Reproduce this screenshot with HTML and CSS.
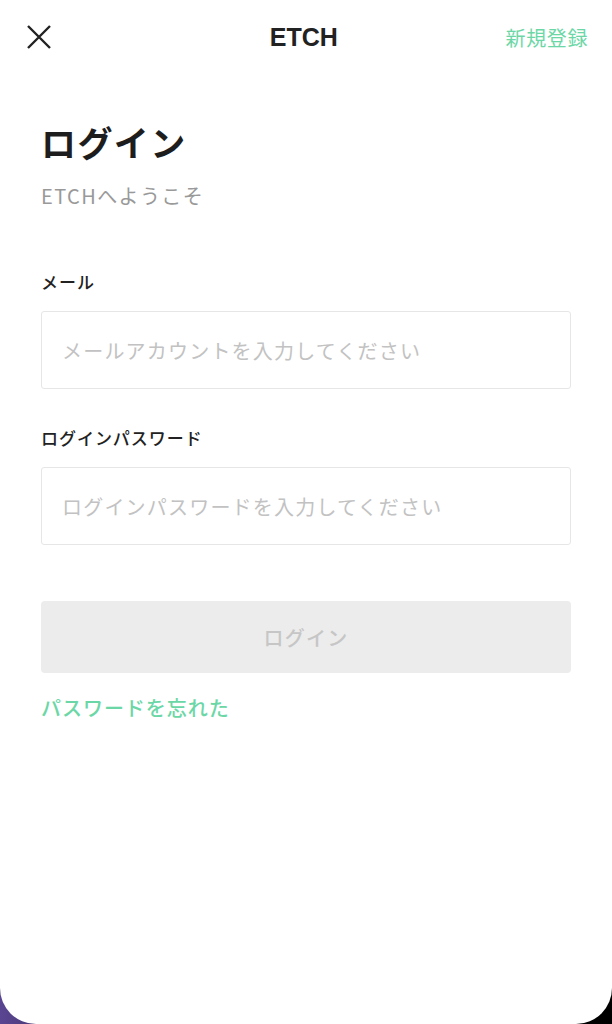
FILE: index.html
```html
<!DOCTYPE html>
<html lang="ja">
<head>
  <meta charset="UTF-8">
  <title>ETCH ログイン</title>
  <link rel="stylesheet" href="styles.css">
</head>
<body>

<div class="screen">
  <header class="topbar">
    <button class="close-btn" aria-label="閉じる">
      <svg width="26" height="26" viewBox="0 0 26 26">
        <path d="M2 2 L24 24 M24 2 L2 24" stroke="#222" stroke-width="2.4" fill="none"/>
      </svg>
    </button>
    <div class="brand">ETCH</div>
    <a class="signup" href="#">新規登録</a>
  </header>

  <main class="content">
    <h1>ログイン</h1>
    <p class="welcome">ETCHへようこそ</p>

    <form class="login-form">
      <label class="field-label">メール</label>
      <input class="field" type="text" placeholder="メールアカウントを入力してください">

      <label class="field-label">ログインパスワード</label>
      <input class="field" type="password" placeholder="ログインパスワードを入力してください">

      <button class="submit-btn" type="button" disabled>ログイン</button>
    </form>

    <a class="forgot" href="#">パスワードを忘れた</a>
  </main>
</div>

</body>
</html>
```

FILE: styles.css
```css
html, body {
  margin: 0;
  height: 100%;
}
body {
  font-family: "Noto Sans CJK JP", "Noto Sans", sans-serif;
  letter-spacing: 0.06em;
  background: linear-gradient(to right, #5a4592, #111 30%, #000);
  overflow: hidden;
}
.screen {
  background: #fff;
  height: 1024px;
  border-radius: 0 0 36px 36px;
  box-sizing: border-box;
}
.topbar {
  display: flex;
  align-items: center;
  justify-content: space-between;
  height: 74px;
  padding: 0 24px 0 26px;
}
.close-btn {
  border: none;
  background: none;
  padding: 0;
  width: 26px;
  height: 26px;
  display: flex;
}
.brand {
  font-family: "Liberation Sans", "Noto Sans", sans-serif;
  font-weight: bold;
  font-size: 25px;
  letter-spacing: 0;
  color: #222;
  margin-left: 50px;
}
.signup {
  color: #6cd7a6;
  font-size: 20px;
  letter-spacing: 0.03em;
  text-decoration: none;
}
.content {
  padding: 40px 41px 0;
}
h1 {
  margin: 0;
  font-size: 35px;
  font-weight: bold;
  letter-spacing: 0.04em;
  color: #1d1d1d;
  line-height: 56px;
}
.welcome {
  margin: 11px 0 0;
  font-size: 20px;
  letter-spacing: 0.07em;
  color: #999;
  line-height: 30px;
}
.login-form {
  display: flex;
  flex-direction: column;
  margin-top: 58px;
}
.field-label {
  font-size: 17px;
  font-weight: 500;
  color: #222;
  line-height: 26px;
}
.field {
  margin: 16px 0 36px;
  height: 78px;
  box-sizing: border-box;
  border: 1.5px solid #e6e6e6;
  border-radius: 3px;
  padding: 0 20px;
  font-family: inherit;
  font-size: 20px;
  letter-spacing: 0.06em;
  outline: none;
}
.field::placeholder {
  color: #c2c2c2;
}
.submit-btn {
  margin-top: 20px;
  height: 72px;
  border: none;
  border-radius: 4px;
  background: #ececec;
  color: #c6c6c6;
  font-family: inherit;
  font-size: 20px;
  font-weight: 500;
  letter-spacing: 0.06em;
}
.forgot {
  display: inline-block;
  margin-top: 20px;
  color: #6cd7a6;
  font-size: 20px;
  font-weight: 500;
  text-decoration: none;
}
```
